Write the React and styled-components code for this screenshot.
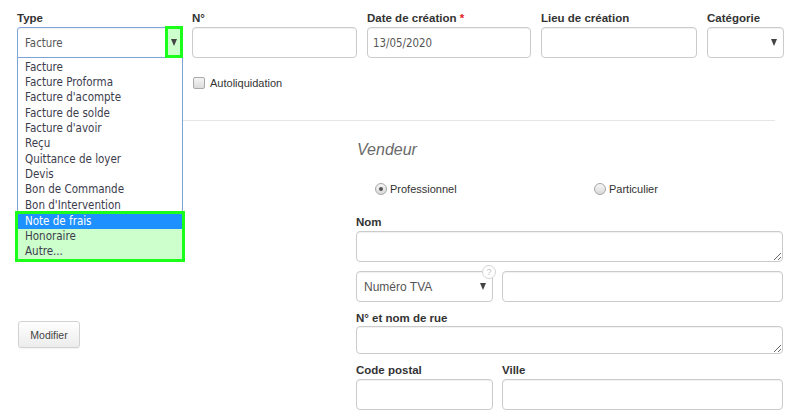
import React from "react";
import styled, { createGlobalStyle } from "styled-components";

const GlobalStyle = createGlobalStyle`
  body {
    margin: 0;
    background: #fff;
    font-family: "Liberation Sans", Arial, sans-serif;
    color: #333;
  }
`;

const Page = styled.div`
  width: 800px;
  height: 419px;
  box-sizing: border-box;
  padding: 11px 17px 0 17px;
  overflow: hidden;
`;

const TopRow = styled.div`
  display: grid;
  grid-template-columns: 165px 165px 164px 156px 77px;
  column-gap: 10px;
`;

const Field = styled.div`
  position: relative;
  display: flex;
  flex-direction: column;
`;

const Label = styled.label`
  font-size: 11.5px;
  font-weight: bold;
  line-height: 14px;
  height: 14px;
  margin-bottom: ${(p) => p.$gap ?? 2}px;
  color: #333;
  white-space: nowrap;
`;

const Required = styled.span`
  color: #e02020;
`;

const Box = styled.div`
  position: relative;
  box-sizing: border-box;
  height: ${(p) => p.$h || 31}px;
  border: 1px solid ${(p) => (p.$focus ? "#7ea3d8" : "#cbcbcb")};
  border-radius: ${(p) => (p.$focus ? "3px 3px 0 0" : "4px")};
  box-shadow: inset 0 1px 1px rgba(0, 0, 0, 0.06);
  background: #fff;
  display: flex;
  align-items: center;
  padding: 0 ${(p) => (p.$focus ? 7 : 5)}px;
  font-family: "DejaVu Sans Condensed", "DejaVu Sans", sans-serif;
  font-stretch: condensed;
  font-size: 11.4px;
  color: #555;
`;

const SelectText = styled.span`
  font-family: ${(p) => (p.$arial ? '"Liberation Sans", Arial, sans-serif' : "inherit")};
  font-size: ${(p) => (p.$arial ? "12px" : "inherit")};
  padding-left: ${(p) => (p.$arial ? 2 : 0)}px;
  flex: 1;
`;

const Caret = styled.span`
  width: 0;
  height: 0;
  border-left: 3.5px solid transparent;
  border-right: 3.5px solid transparent;
  border-top: 7px solid #444;
  margin-right: ${(p) => p.$right ?? 0}px;
`;

const ArrowMark = styled.div`
  position: absolute;
  top: -2px;
  right: -2px;
  width: 18px;
  height: 32px;
  box-sizing: border-box;
  border: 3px solid #1bff1b;
  background: #ccffcc;
  display: flex;
  align-items: center;
  justify-content: center;
`;

const Dropdown = styled.ul`
  position: absolute;
  top: 47px;
  left: 0;
  width: 166px;
  box-sizing: border-box;
  margin: 0;
  padding: 0;
  list-style: none;
  background: #fff;
  border: 1px solid #7ea3d8;
  border-top: none;
  border-bottom: none;
  font-family: "DejaVu Sans Condensed", "DejaVu Sans", sans-serif;
  font-stretch: condensed;
  font-size: 11.5px;
  color: #3c3c4c;
  z-index: 5;
`;

const Option = styled.li`
  box-sizing: border-box;
  height: ${(p) => p.$h || 15.35}px;
  padding-top: ${(p) => p.$shift ?? 2.5}px;
  line-height: ${(p) => (p.$h || 15.35) - (p.$shift ?? 2.5)}px;
  padding-left: 7px;
  white-space: nowrap;
  background: ${(p) => (p.$active ? "#1e90ff" : "transparent")};
  color: ${(p) => (p.$active ? "#fff" : "inherit")};
`;

const Marked = styled.div`
  margin: 0 -3px;
  border: 3px solid #1bff1b;
  background: #ccffcc;
`;

const OptionsRow = styled.div`
  display: grid;
  grid-template-columns: 165px 1fr;
  column-gap: 10px;
  margin-top: 19px;
`;

const CheckLine = styled.label`
  grid-column: 2;
  display: flex;
  align-items: center;
  gap: 5px;
  font-size: 11px;
  height: 12px;
`;

const CheckBox = styled.span`
  width: 10px;
  height: 10px;
  margin-left: 1px;
  border: 1px solid #a9a9a9;
  border-radius: 2px;
  background: linear-gradient(#f4f4f4, #dcdcdc);
`;

const Divider = styled.hr`
  margin: 31px 8px 0 0;
  border: none;
  height: 1px;
  background: #e6e6e6;
`;

const Lower = styled.div`
  display: grid;
  grid-template-columns: 1fr 427px;
`;

const Side = styled.div`
  padding-top: 200px;
`;

const Button = styled.button`
  width: 62px;
  height: 27px;
  margin-left: 1px;
  border: 1px solid #d2d2d2;
  border-radius: 3px;
  background: linear-gradient(#ffffff, #ececec);
  font-family: "Liberation Sans", Arial, sans-serif;
  font-size: 10.5px;
  color: #444;
  box-shadow: 0 1px 1px rgba(0, 0, 0, 0.05);
`;

const Section = styled.div`
  display: flex;
  flex-direction: column;
`;

const Heading = styled.h3`
  margin: 19px 0 0 1px;
  font-size: 16px;
  font-weight: normal;
  font-style: italic;
  line-height: 20px;
  color: #6a6a6a;
`;

const RadioRow = styled.div`
  display: grid;
  grid-template-columns: 219px 1fr;
  padding-left: 19px;
  margin-top: 22px;
  height: 14px;
`;

const RadioLine = styled.label`
  display: flex;
  align-items: center;
  gap: 3px;
  font-size: 11px;
`;

const Radio = styled.span`
  position: relative;
  width: 10px;
  height: 10px;
  border-radius: 50%;
  border: 1px solid #a6a6a6;
  background: linear-gradient(#f6f6f6, #dadada);
  &::after {
    content: "";
    display: ${(p) => (p.$on ? "block" : "none")};
    position: absolute;
    left: 3px;
    top: 3px;
    width: 4px;
    height: 4px;
    border-radius: 50%;
    background: #555;
  }
`;

const Group = styled.div`
  display: flex;
  flex-direction: column;
  margin-top: ${(p) => p.$top || 0}px;
`;

const Area = styled.textarea`
  box-sizing: border-box;
  height: ${(p) => p.$h}px;
  width: 100%;
  border: 1px solid #cbcbcb;
  border-radius: 4px;
  box-shadow: inset 0 1px 1px rgba(0, 0, 0, 0.06);
  resize: vertical;
  outline: none;
  margin: 0;
`;

const Pair = styled.div`
  display: grid;
  grid-template-columns: 137px 1fr;
  column-gap: 9px;
  margin-top: ${(p) => p.$top || 0}px;
`;

const Help = styled.span`
  position: absolute;
  right: -4px;
  top: -7px;
  width: 14px;
  height: 14px;
  box-sizing: border-box;
  border: 1px solid #d4d4d4;
  border-radius: 50%;
  background: #fff;
  color: #c4c4c4;
  font-family: "Liberation Sans", Arial, sans-serif;
  font-size: 9px;
  line-height: 12px;
  text-align: center;
`;

export default function App() {
  const types = [
    "Facture",
    "Facture Proforma",
    "Facture d'acompte",
    "Facture de solde",
    "Facture d'avoir",
    "Reçu",
    "Quittance de loyer",
    "Devis",
    "Bon de Commande",
    "Bon d'Intervention",
  ];

  return (
    <>
      <GlobalStyle />
      <Page>
        <TopRow>
          <Field>
            <Label>Type</Label>
            <Box $focus>
              <SelectText>Facture</SelectText>
              <ArrowMark>
                <Caret />
              </ArrowMark>
            </Box>
            <Dropdown>
              {types.map((t) => (
                <Option key={t}>{t}</Option>
              ))}
              <Marked>
                <Option $active $h={15} $shift={0}>
                  Note de frais
                </Option>
                <Option $h={15} $shift={0}>
                  Honoraire
                </Option>
                <Option $h={15} $shift={0}>
                  Autre...
                </Option>
              </Marked>
            </Dropdown>
          </Field>
          <Field>
            <Label>N°</Label>
            <Box />
          </Field>
          <Field>
            <Label>
              Date de création <Required>*</Required>
            </Label>
            <Box>13/05/2020</Box>
          </Field>
          <Field>
            <Label>Lieu de création</Label>
            <Box />
          </Field>
          <Field>
            <Label>Catégorie</Label>
            <Box>
              <SelectText />
              <Caret $right={1} />
            </Box>
          </Field>
        </TopRow>

        <OptionsRow>
          <CheckLine>
            <CheckBox />
            Autoliquidation
          </CheckLine>
        </OptionsRow>

        <Divider />

        <Lower>
          <Side>
            <Button>Modifier</Button>
          </Side>
          <Section>
            <Heading>Vendeur</Heading>
            <RadioRow>
              <RadioLine>
                <Radio $on />
                Professionnel
              </RadioLine>
              <RadioLine>
                <Radio />
                Particulier
              </RadioLine>
            </RadioRow>

            <Group $top={19}>
              <Label>Nom</Label>
              <Area $h={31} />
            </Group>

            <Pair $top={9}>
              <Box>
                <SelectText $arial>Numéro TVA</SelectText>
                <Caret $right={1} />
                <Help>?</Help>
              </Box>
              <Box />
            </Pair>

            <Group $top={9}>
              <Label $gap={1}>N° et nom de rue</Label>
              <Area $h={28} />
            </Group>

            <Pair $top={9}>
              <Group>
                <Label>Code postal</Label>
                <Box />
              </Group>
              <Group>
                <Label>Ville</Label>
                <Box />
              </Group>
            </Pair>
          </Section>
        </Lower>
      </Page>
    </>
  );
}
